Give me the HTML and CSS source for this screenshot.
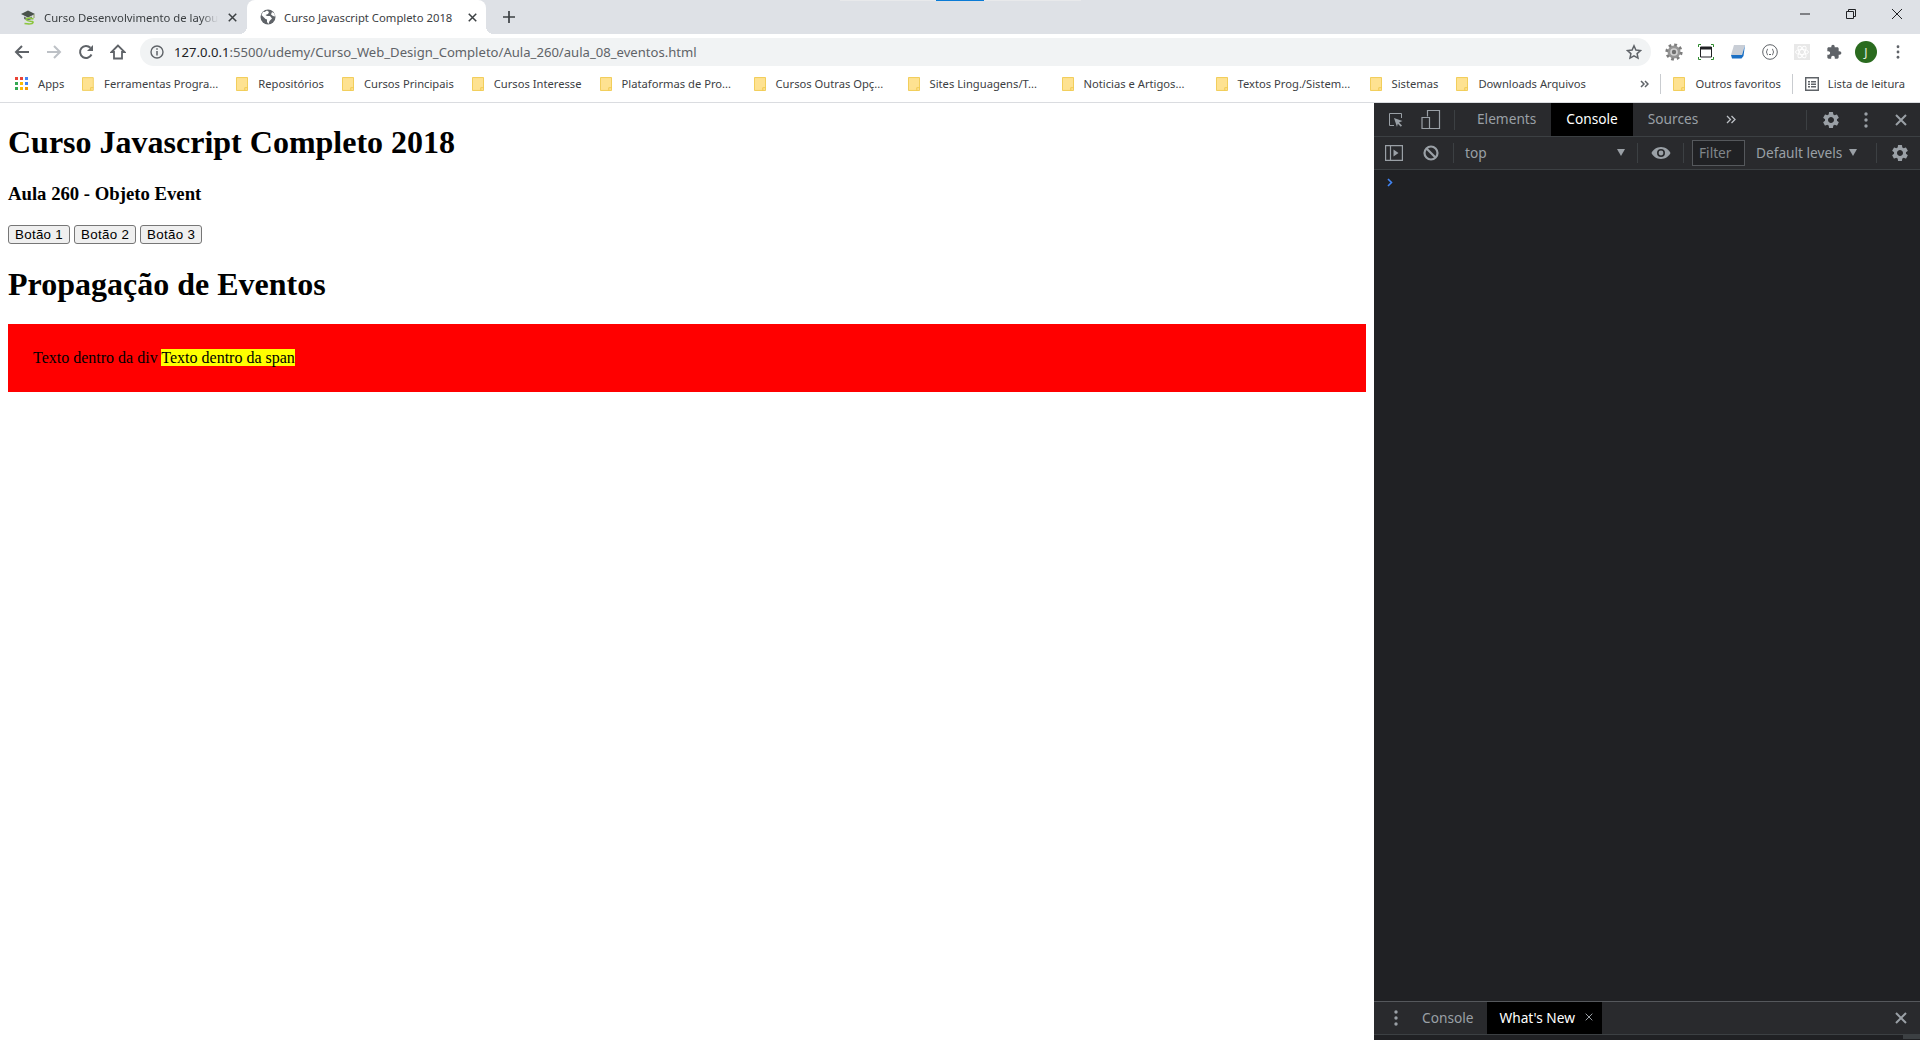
FILE: index.html
```html
<!DOCTYPE html>
<html lang="en">
<head>
  <meta charset="UTF-8" />
  <title>Curso Javascript Completo 2018</title>
  <link rel="stylesheet" href="styles.css">
</head>
<body>

  <!-- Shared icons -->
  <svg class="sprites" aria-hidden="true">
    <symbol id="folder" viewBox="0 0 13 15">
      <path d="M.5.5h12v14H.5z" fill="#fee291" stroke="#f0c94e"/>
      <path d="M9.5 14.5v-3h3" fill="none" stroke="#f0c94e"/>
    </symbol>
    <symbol id="gear" viewBox="0 0 24 24">
      <path d="M19.14 12.94c.04-.3.06-.61.06-.94 0-.32-.02-.64-.07-.94l2.03-1.58a.49.49 0 0 0 .12-.61l-1.92-3.32a.488.488 0 0 0-.59-.22l-2.39.96c-.5-.38-1.03-.7-1.62-.94l-.36-2.54a.484.484 0 0 0-.48-.41h-3.84c-.24 0-.43.17-.47.41l-.36 2.54c-.59.24-1.13.57-1.62.94l-2.39-.96c-.22-.08-.47 0-.59.22L2.74 8.87c-.12.21-.08.47.12.61l2.03 1.58c-.05.3-.09.63-.09.94s.02.64.07.94l-2.03 1.58a.49.49 0 0 0-.12.61l1.92 3.32c.12.22.37.29.59.22l2.39-.96c.5.38 1.03.7 1.62.94l.36 2.54c.05.24.24.41.48.41h3.84c.24 0 .44-.17.47-.41l.36-2.54c.59-.24 1.13-.56 1.62-.94l2.39.96c.22.08.47 0 .59-.22l1.92-3.32c.12-.22.07-.47-.12-.61l-2.01-1.58zM12 15.6c-1.98 0-3.6-1.62-3.6-3.6s1.62-3.6 3.6-3.6 3.6 1.62 3.6 3.6-1.62 3.6-3.6 3.6z" fill="currentColor"/>
    </symbol>
    <symbol id="dots" viewBox="0 0 4 16">
      <circle cx="2" cy="2" r="1.7" fill="currentColor"/>
      <circle cx="2" cy="8" r="1.7" fill="currentColor"/>
      <circle cx="2" cy="14" r="1.7" fill="currentColor"/>
    </symbol>
    <symbol id="cross" viewBox="0 0 12 12">
      <path d="M1 1l10 10M11 1L1 11" fill="none" stroke="currentColor" stroke-width="2"/>
    </symbol>
  </svg>

  <div class="window">

    <!-- Tab strip -->
    <div class="tabstrip">
      <div class="share-bar"><span class="share-bar-fill"></span></div>
      <div class="tab">
        <svg class="favicon" viewBox="0 0 16 16">
          <path d="M1 5l7-3.5L15 5 8 8.5z" fill="#4a524c"/>
          <path d="M4 7.5V10l4 1.5L12 10V7.5L8 9.5z" fill="#6a726c"/>
          <path d="M14 5.5V9" stroke="#8a9a5b" fill="none"/>
          <path d="M13.5 10C9.5 8.5 5.5 9 6.5 11s7 .5 6.5 2.5-5 1.5-8.5 1" fill="none" stroke="#8cc63f" stroke-width="1.6"/>
        </svg>
        <span class="tab-title tab-title-fade">Curso Desenvolvimento de layout</span>
        <svg class="tab-close" viewBox="0 0 12 12"><use href="#cross"/></svg>
      </div>
      <div class="tab tab-active">
        <svg class="favicon" viewBox="0 0 16 16">
          <circle cx="8" cy="8" r="7.5" fill="#5f6368"/>
          <path d="M7 1.5L4.5 3 3 2.8 1.5 6l4 4 1.5.5V13l1.5 2 1-3 2.5-2.5-2-2.5H7L5.5 6 8 5l1-2zM12 3l-1 2.5 2 1.5 2 .5-.5-3z" fill="#fff"/>
        </svg>
        <span class="tab-title">Curso Javascript Completo 2018</span>
        <svg class="tab-close" viewBox="0 0 12 12"><use href="#cross"/></svg>
      </div>
      <svg class="new-tab" viewBox="0 0 12 12"><path d="M6 0v12M0 6h12" fill="none" stroke="#3c4043" stroke-width="1.7"/></svg>
      <div class="window-controls">
        <div class="window-btn"><svg viewBox="0 0 10 10"><path d="M0 5h10" stroke="#202124" fill="none"/></svg></div>
        <div class="window-btn"><svg viewBox="0 0 10 10"><path d="M.5 2.5h7v7h-7zM2.5 2.5V.5h7v7h-2" stroke="#202124" fill="none"/></svg></div>
        <div class="window-btn"><svg viewBox="0 0 10 10"><path d="M0 0l10 10M10 0L0 10" stroke="#202124" fill="none"/></svg></div>
      </div>
    </div>

    <!-- Address bar row -->
    <div class="toolbar">
      <div class="nav-btn">
        <svg viewBox="0 0 16 16"><path d="M15 8H2M8 2L2 8l6 6" fill="none" stroke="#5f6368" stroke-width="2"/></svg>
      </div>
      <div class="nav-btn">
        <svg viewBox="0 0 16 16"><path d="M1 8h13M8 2l6 6-6 6" fill="none" stroke="#bdc1c6" stroke-width="2"/></svg>
      </div>
      <div class="nav-btn">
        <svg viewBox="0 0 16 16"><path d="M13.5 10.5A6 6 0 1 1 12.4 3.8" fill="none" stroke="#5f6368" stroke-width="2"/><path d="M15 1v6H9z" fill="#5f6368"/></svg>
      </div>
      <div class="nav-btn">
        <svg viewBox="0 0 16 16"><path d="M8 1.5L1.5 8H4v6.5h8V8h2.5z" fill="none" stroke="#5f6368" stroke-width="1.8"/></svg>
      </div>
      <div class="urlbar">
        <svg class="url-info" viewBox="0 0 14 14">
          <circle cx="7" cy="7" r="6" fill="none" stroke="#5f6368" stroke-width="1.4"/>
          <path d="M7 6v4.5M7 3.3v1.5" stroke="#5f6368" stroke-width="1.5" fill="none"/>
        </svg>
        <span class="url-text"><span class="url-host">127.0.0.1</span>:5500/udemy/Curso_Web_Design_Completo/Aula_260/aula_08_eventos.html</span>
        <svg class="url-star" viewBox="0 0 16 16"><path d="M8 1.8l1.9 4.2 4.6.5-3.4 3.1.9 4.5L8 11.8l-4 2.3.9-4.5L1.5 6.5 6.1 6z" fill="none" stroke="#5f6368" stroke-width="1.5"/></svg>
      </div>
      <div class="ext-icons">
        <div class="ext-btn">
          <svg viewBox="0 0 18 18" class="icon-18sq">
            <circle cx="9" cy="9" r="6.5" fill="#959595"/>
            <circle cx="9" cy="9" r="7.3" fill="none" stroke="#7d7d7d" stroke-width="2.6" stroke-dasharray="2.8 2.93"/>
            <circle cx="9" cy="9" r="3.8" fill="#d0d0d0"/>
            <circle cx="9" cy="9" r="2.2" fill="#707070"/>
          </svg>
        </div>
        <div class="ext-btn">
          <svg viewBox="0 0 16 16" class="icon-16">
            <path d="M.5 3V.5H3M13 .5h2.5V3M15.5 13v2.5H13M3 15.5H.5V13" fill="none" stroke="#2e8b2e"/>
            <path d="M2.5 3h11v10h-11z" fill="#fff" stroke="#202124"/>
            <path d="M2.5 3h11v2.5h-11z" fill="#202124"/>
          </svg>
        </div>
        <div class="ext-btn">
          <svg viewBox="0 0 16 16" class="icon-16">
            <path d="M4 1h11l-3 10H1z" fill="#c9ced6"/>
            <path d="M1 11h11l3-10-1.5 11-2 2.5H2z" fill="#1a6fc4"/>
          </svg>
        </div>
        <div class="ext-btn">
          <svg viewBox="0 0 16 16" class="icon-16">
            <circle cx="8" cy="8" r="7.3" fill="none" stroke="#5f6368"/>
            <path d="M6 5C4.5 5 5.5 8 4 8c1.5 0 .5 3 2 3M10 5c1.500 0 .5 3 2 3-1.500 0-.5 3-2 3M7 10.500h2" fill="none" stroke="#5f6368"/>
          </svg>
        </div>
        <div class="ext-btn">
          <svg viewBox="0 0 16 16" class="icon-16">
            <path d="M0 0h16v16H0z" fill="#e8e8e8"/>
            <g fill="none" stroke="#fff">
              <ellipse cx="8" cy="8" rx="6.5" ry="2.5"/>
              <ellipse cx="8" cy="8" rx="6.5" ry="2.5" transform="rotate(60 8 8)"/>
              <ellipse cx="8" cy="8" rx="6.5" ry="2.5" transform="rotate(120 8 8)"/>
            </g>
          </svg>
        </div>
        <div class="ext-btn">
          <svg viewBox="0 0 24 24" class="icon-16"><path d="M20.5 11H19V7c0-1.1-.9-2-2-2h-4V3.5C13 2.12 11.88 1 10.5 1S8 2.12 8 3.5V5H4c-1.1 0-1.99.9-1.99 2v3.8H3.5c1.49 0 2.7 1.21 2.7 2.7s-1.21 2.7-2.7 2.7H2V20c0 1.1.9 2 2 2h3.8v-1.5c0-1.49 1.21-2.7 2.7-2.7 1.49 0 2.7 1.21 2.7 2.7V22H17c1.1 0 2-.9 2-2v-4h1.5c1.38 0 2.5-1.12 2.5-2.5S21.88 11 20.5 11z" fill="#5f6368"/></svg>
        </div>
        <div class="ext-btn"><span class="avatar">J</span></div>
        <div class="ext-btn">
          <svg viewBox="0 0 4 16" class="menu-dots"><use href="#dots"/></svg>
        </div>
      </div>
    </div>

    <!-- Bookmarks -->
    <div class="bookmarks">
      <div class="bookmark">
        <svg class="apps-grid" viewBox="0 0 13 13">
          <path d="M0 0h3v3H0z" fill="#ea4335"/><path d="M5 0h3v3H5z" fill="#ea4335"/><path d="M10 0h3v3h-3z" fill="#4285f4"/>
          <path d="M0 5h3v3H0z" fill="#34a853"/><path d="M5 5h3v3H5z" fill="#fbbc04"/><path d="M10 5h3v3h-3z" fill="#4285f4"/>
          <path d="M0 10h3v3H0z" fill="#34a853"/><path d="M5 10h3v3H5z" fill="#fbbc04"/><path d="M10 10h3v3h-3z" fill="#f29900"/>
        </svg>
        <span>Apps</span>
      </div>
      <div class="bookmark bookmark-long"><svg class="folder"><use href="#folder"/></svg><span>Ferramentas Progra...</span></div>
      <div class="bookmark"><svg class="folder"><use href="#folder"/></svg><span>Repositórios</span></div>
      <div class="bookmark"><svg class="folder"><use href="#folder"/></svg><span>Cursos Principais</span></div>
      <div class="bookmark"><svg class="folder"><use href="#folder"/></svg><span>Cursos Interesse</span></div>
      <div class="bookmark bookmark-long"><svg class="folder"><use href="#folder"/></svg><span>Plataformas de Pro...</span></div>
      <div class="bookmark bookmark-long"><svg class="folder"><use href="#folder"/></svg><span>Cursos Outras Opç...</span></div>
      <div class="bookmark bookmark-long"><svg class="folder"><use href="#folder"/></svg><span>Sites Linguagens/T...</span></div>
      <div class="bookmark bookmark-long"><svg class="folder"><use href="#folder"/></svg><span>Noticias e Artigos...</span></div>
      <div class="bookmark bookmark-long"><svg class="folder"><use href="#folder"/></svg><span>Textos Prog./Sistem...</span></div>
      <div class="bookmark"><svg class="folder"><use href="#folder"/></svg><span>Sistemas</span></div>
      <div class="bookmark"><svg class="folder"><use href="#folder"/></svg><span>Downloads Arquivos</span></div>
      <div class="bookmarks-end">
        <svg class="chevrons" viewBox="0 0 9 8"><path d="M1 1l3 3-3 3M5 1l3 3-3 3" fill="none" stroke="#5f6368" stroke-width="1.5"/></svg>
        <span class="bookmark-sep"></span>
        <div class="bookmark"><svg class="folder"><use href="#folder"/></svg><span>Outros favoritos</span></div>
        <span class="bookmark-sep"></span>
        <div class="bookmark reading-list">
          <svg class="icon-14" viewBox="0 0 14 14">
            <path d="M.7.7h12.6v12.6H.7z" fill="none" stroke="#5f6368" stroke-width="1.4"/>
            <path d="M3 4h2v1.5H3zM3 6.5h2V8H3zM3 9h2v1.5H3zM6 4h5v1.5H6zM6 6.5h5V8H6zM6 9h5v1.5H6z" fill="#5f6368"/>
          </svg>
          <span>Lista de leitura</span>
        </div>
      </div>
    </div>

    <div class="main">

      <!-- The page itself -->
      <div class="page">
        <h1>Curso Javascript Completo 2018</h1>
        <h3>Aula 260 - Objeto Event</h3>
        <div class="buttons">
          <button>Botão 1</button>
          <button>Botão 2</button>
          <button>Botão 3</button>
        </div>
        <h1>Propagação de Eventos</h1>
        <div class="box">Texto dentro da div <span class="highlight">Texto dentro da span</span></div>
      </div>

      <!-- DevTools panel -->
      <div class="devtools">
        <div class="dt-row dt-tabs">
          <div class="dt-icon dt-icon-left">
            <svg class="icon-16" viewBox="0 0 16 16">
              <path d="M6 13.5H1.5v-12h12V6" fill="none" stroke="#9aa0a6"/>
              <path d="M6 6l8.5 3-3.5 1.5 3 3-1.2 1.2-3-3L9 15z" fill="#9aa0a6"/>
            </svg>
          </div>
          <div class="dt-icon">
            <svg class="icon-20" viewBox="0 0 20 20">
              <path d="M6.5 6.5v-6h12v18h-12M1 7.5h7.5v11H1z" fill="none" stroke="#9aa0a6" stroke-width="1.2"/>
            </svg>
          </div>
          <span class="dt-sep dt-sep-tabs"></span>
          <div class="dt-tab">Elements</div>
          <div class="dt-tab dt-tab-active">Console</div>
          <div class="dt-tab">Sources</div>
          <div class="dt-more">
            <svg viewBox="0 0 10 9" class="icon-10"><path d="M1 1l3.5 3.5L1 8M5.5 1L9 4.5 5.500 8" fill="none" stroke="#bdc1c6" stroke-width="1.3"/></svg>
          </div>
          <div class="dt-right">
            <span class="dt-sep"></span>
            <div class="dt-icon dt-icon-gear"><svg class="icon-20 dt-grey"><use href="#gear"/></svg></div>
            <div class="dt-icon"><svg class="dt-dots dt-grey"><use href="#dots"/></svg></div>
            <div class="dt-icon"><svg class="icon-12 dt-grey"><use href="#cross"/></svg></div>
          </div>
        </div>
        <div class="dt-row dt-console-bar">
          <div class="dt-icon dt-icon-wide">
            <svg class="icon-18" viewBox="0 0 18 16">
              <path d="M.6.6h16.8v14.800H.6zM5.5.6v14.800" fill="none" stroke="#9aa0a6" stroke-width="1.2"/>
              <path d="M8.5 4.5l5 3.5-5 3.5z" fill="#9aa0a6"/>
            </svg>
          </div>
          <div class="dt-icon dt-icon-wide">
            <svg class="icon-16" viewBox="0 0 16 16">
              <circle cx="8" cy="8" r="6.5" fill="none" stroke="#9aa0a6" stroke-width="2.2"/>
              <path d="M3.5 3.5l9 9" stroke="#9aa0a6" stroke-width="2.2" fill="none"/>
            </svg>
          </div>
          <span class="dt-sep"></span>
          <div class="dt-context">
            <span>top</span>
            <span class="dt-caret"></span>
          </div>
          <span class="dt-sep"></span>
          <div class="dt-eye">
            <svg class="icon-20" viewBox="0 0 20 14">
              <path d="M10 1C5.5 1 2 3.8.5 7c1.5 3.2 5 6 9.5 6s8-2.8 9.5-6C18 3.8 14.5 1 10 1zm0 10a4 4 0 1 1 0-8 4 4 0 0 1 0 8zm0-6.4a2.4 2.4 0 1 0 0 4.8 2.4 2.4 0 0 0 0-4.8z" fill="#9aa0a6"/>
            </svg>
          </div>
          <span class="dt-sep"></span>
          <div class="dt-filter">Filter</div>
          <div class="dt-levels">
            <span>Default levels</span>
            <span class="dt-caret"></span>
          </div>
          <span class="dt-sep"></span>
          <div class="dt-icon dt-icon-end"><svg class="icon-20 dt-grey"><use href="#gear"/></svg></div>
        </div>
        <div class="dt-console">
          <svg class="dt-prompt" viewBox="0 0 6 9"><path d="M1 1l3.5 3.5L1 8" fill="none" stroke="#4285f4" stroke-width="1.6"/></svg>
        </div>
        <div class="dt-row dt-drawer">
          <div class="dt-drawer-menu"><svg class="dt-dots dt-grey"><use href="#dots"/></svg></div>
          <div class="dt-tab">Console</div>
          <div class="dt-tab dt-tab-active dt-tab-closable">
            What's New
            <svg class="dt-tab-x" viewBox="0 0 12 12"><path d="M1 1l10 10M11 1L1 11" fill="none" stroke="#9aa0a6" stroke-width="1.5"/></svg>
          </div>
          <div class="dt-right">
            <div class="dt-icon"><svg class="icon-12 dt-grey"><use href="#cross"/></svg></div>
          </div>
        </div>
        <div class="dt-footer"><span class="dt-grip"></span></div>
      </div>
    </div>
  </div>

</body>
</html>
```

FILE: styles.css
```css
:root {
  --strip: #dee1e6;
  --chrome-text: #3c4043;
  --chrome-icon: #5f6368;
  --dt-bg: #202124;
  --dt-bar: #292a2d;
  --dt-line: #3c4043;
  --dt-text: #9aa0a6;
  --ui-font: 'Noto Sans', 'Open Sans', sans-serif;
}

html, body {
  margin: 0;
  padding: 0;
  height: 100%;
  overflow: hidden;
}

.sprites {
  width: 0;
  height: 0;
  display: block;
}

.window {
  display: flex;
  flex-direction: column;
  height: 1040px;
  font-family: var(--ui-font);
  color: var(--chrome-text);
  background: white;
}

/* Tab strip */
.tabstrip {
  position: relative;
  display: flex;
  align-items: stretch;
  height: 34px;
  background: var(--strip);
  flex: none;
}

.share-bar {
  position: absolute;
  top: 0;
  left: 840px;
  width: 241px;
  height: 1px;
  background: #e8e9eb;
}

.share-bar-fill {
  display: block;
  margin-left: 96px;
  width: 48px;
  height: 1px;
  background: #0a7bd6;
}

.tab {
  display: flex;
  align-items: center;
  width: 247px;
  box-sizing: border-box;
  padding-left: 20px;
  font-size: 11.3px;
}

.tab-active {
  position: relative;
  width: 239px;
  padding-left: 13px;
  background: white;
  border-radius: 8px 8px 0 0;
}

.tab-active::before, .tab-active::after {
  content: "";
  position: absolute;
  bottom: 0;
  width: 8px;
  height: 8px;
}

.tab-active::before {
  left: -8px;
  background: radial-gradient(circle at 0 0, transparent 8px, white 8px);
}

.tab-active::after {
  right: -8px;
  background: radial-gradient(circle at 100% 0, transparent 8px, white 8px);
}

.favicon {
  width: 16px;
  height: 16px;
  flex: none;
}

.tab-title {
  margin-left: 8px;
  width: 174px;
  white-space: nowrap;
  overflow: hidden;
  flex: none;
}

.tab-title-fade {
  -webkit-mask-image: linear-gradient(to right, black 90%, transparent 100%);
  mask-image: linear-gradient(to right, black 90%, transparent 100%);
}

.tab-close {
  width: 9px;
  height: 9px;
  margin-left: 10px;
  color: var(--chrome-text);
  flex: none;
}

.new-tab {
  width: 12px;
  height: 12px;
  align-self: center;
  margin-left: 17px;
}

.window-controls {
  display: flex;
  margin-left: auto;
}

.window-btn {
  width: 46px;
  height: 28px;
  display: flex;
  align-items: center;
  justify-content: center;
}

.window-btn svg {
  width: 10px;
  height: 10px;
}

/* Address bar row */
.toolbar {
  display: flex;
  align-items: center;
  height: 36px;
  padding: 0 6px;
  flex: none;
}

.nav-btn, .ext-btn {
  width: 32px;
  height: 28px;
  display: flex;
  align-items: center;
  justify-content: center;
  flex: none;
}

.nav-btn svg {
  width: 16px;
  height: 16px;
}

.urlbar {
  flex: 1;
  display: flex;
  align-items: center;
  height: 28px;
  margin: 0 7px 0 6px;
  padding: 0 9px 0 10px;
  background: #f1f3f4;
  border-radius: 14px;
  font-size: 13.1px;
  color: var(--chrome-icon);
}

.url-info {
  width: 14px;
  height: 14px;
  flex: none;
}

.url-text {
  margin-left: 10px;
  white-space: nowrap;
}

.url-host {
  color: #202124;
}

.url-star {
  width: 16px;
  height: 16px;
  margin-left: auto;
}

.ext-icons {
  display: flex;
}

.icon-10 { width: 10px; height: 9px; }
.icon-12 { width: 12px; height: 12px; }
.icon-14 { width: 14px; height: 14px; }
.icon-16 { width: 16px; height: 16px; }
.icon-18 { width: 18px; height: 16px; }
.icon-18sq { width: 18px; height: 18px; }
.icon-20 { width: 20px; height: 20px; }

.avatar {
  width: 22px;
  height: 22px;
  border-radius: 50%;
  background: #2a6b1f;
  color: #e6f0e0;
  font-size: 12px;
  display: flex;
  align-items: center;
  justify-content: center;
}

.menu-dots {
  width: 4px;
  height: 14px;
  color: var(--chrome-icon);
}

/* Bookmarks */
.bookmarks {
  display: flex;
  align-items: center;
  gap: 18px;
  height: 33px;
  box-sizing: border-box;
  padding: 0 0 5px 15px;
  border-bottom: 1px solid #dadce0;
  font-size: 11.2px;
  flex: none;
}

.bookmark {
  display: flex;
  align-items: center;
  gap: 10px;
  white-space: nowrap;
}

.bookmark-long {
  width: 136px;
}

.apps-grid {
  width: 13px;
  height: 13px;
}

.folder {
  width: 12px;
  height: 14px;
}

.bookmarks-end {
  display: flex;
  align-items: center;
  margin-left: auto;
  padding-right: 15px;
}

.chevrons {
  width: 9px;
  height: 8px;
}

.bookmark-sep {
  width: 1px;
  height: 20px;
  margin: 0 12px 0 11px;
  background: #c9ccd0;
}

.reading-list {
  gap: 9px;
}

/* Main split */
.main {
  flex: 1;
  display: flex;
  min-height: 0;
}

/* The page */
.page {
  flex: 1;
  min-width: 0;
  padding: 0 8px;
  font-family: 'Liberation Serif', serif;
  color: black;
  overflow: hidden;
}

.page h1 {
  font-size: 32px;
  margin: 21.44px 0;
}

.page h3 {
  font-size: 18.72px;
  margin: 18.72px 0;
}

.buttons {
  display: flex;
  gap: 4px;
  padding: 1px 0;
}

.buttons button {
  font-family: 'Liberation Sans', sans-serif;
  font-size: 13.333px;
  letter-spacing: 0.3px;
  padding: 1px 6px;
  border: 1px solid #767676;
  border-radius: 3px;
  background: #efefef;
  color: black;
}

.box {
  background: red;
  padding: 25px;
  font-size: 16px;
}

.highlight {
  background: yellow;
}

/* DevTools */
.devtools {
  width: 546px;
  flex: none;
  display: flex;
  flex-direction: column;
  background: var(--dt-bg);
  color: var(--dt-text);
  font-size: 13.7px;
}

.dt-row {
  display: flex;
  align-items: stretch;
  background: var(--dt-bar);
  flex: none;
}

.dt-tabs {
  height: 33px;
  border-bottom: 1px solid var(--dt-line);
}

.dt-console-bar {
  height: 32px;
  align-items: center;
  border-bottom: 1px solid var(--dt-line);
}

.dt-icon {
  width: 35px;
  display: flex;
  align-items: center;
  justify-content: center;
  flex: none;
}

.dt-icon-left {
  margin-left: 5px;
  width: 34px;
}

.dt-grey {
  color: var(--dt-text);
}

.dt-dots {
  width: 4px;
  height: 16px;
}

.dt-sep {
  width: 1px;
  height: 20px;
  background: var(--dt-line);
  align-self: center;
  flex: none;
}

.dt-sep-tabs {
  margin: 0 7px 0 6px;
}

.dt-tab {
  display: flex;
  align-items: center;
  padding: 0 15px 2px;
  white-space: nowrap;
}

.dt-tab-active {
  background: black;
  color: white;
}

.dt-more {
  width: 36px;
  display: flex;
  align-items: center;
  justify-content: center;
}

.dt-right {
  display: flex;
  align-items: stretch;
  margin-left: auto;
  padding-right: 2px;
}

.dt-right .dt-sep {
  margin-right: 6px;
}

.dt-icon-wide {
  width: 36px;
}

.dt-icon-wide:first-child {
  margin-left: 2px;
  margin-right: 1px;
}

.dt-icon-wide + .dt-sep {
  margin-left: 4px;
}

.dt-context {
  width: 183px;
  height: 30px;
  box-sizing: border-box;
  padding: 0 12px 2px 11px;
  display: flex;
  align-items: center;
  justify-content: space-between;
}

.dt-caret {
  width: 0;
  height: 0;
  border-left: 4px solid transparent;
  border-right: 4px solid transparent;
  border-top: 7px solid var(--dt-text);
}

.dt-eye {
  width: 45px;
  display: flex;
  align-items: center;
  justify-content: center;
  flex: none;
}

.dt-eye svg {
  height: 14px;
}

.dt-filter {
  margin-left: 8px;
  width: 53px;
  height: 26px;
  box-sizing: border-box;
  padding-left: 6px;
  border: 1px solid #55585c;
  background: var(--dt-bg);
  line-height: 23px;
  color: #80868b;
  flex: none;
}

.dt-levels {
  margin-left: 11px;
  width: 120px;
  height: 30px;
  box-sizing: border-box;
  padding: 0 19px 2px 0;
  display: flex;
  align-items: center;
  justify-content: space-between;
  flex: none;
}

.dt-icon-end {
  width: 43px;
  box-sizing: border-box;
  padding-left: 3px;
}

.dt-console {
  flex: 1;
  min-height: 0;
  padding: 8px 0 0 13px;
}

.dt-prompt {
  display: block;
  width: 6px;
  height: 9px;
}

.dt-drawer {
  height: 34px;
  box-sizing: border-box;
  border-top: 1px solid #55585c;
  border-bottom: 1px solid var(--dt-line);
}

.dt-drawer-menu {
  width: 33px;
  padding-left: 11px;
  box-sizing: border-box;
  display: flex;
  align-items: center;
  justify-content: center;
}

.dt-tab-closable {
  padding: 0 9px 2px 12px;
  margin-left: -1px;
  gap: 10px;
}

.dt-tab-x {
  width: 8px;
  height: 8px;
}

.dt-footer {
  display: flex;
  justify-content: flex-end;
  height: 5px;
  flex: none;
}

.dt-grip {
  width: 17px;
  height: 4px;
  background: var(--dt-line);
}
```
